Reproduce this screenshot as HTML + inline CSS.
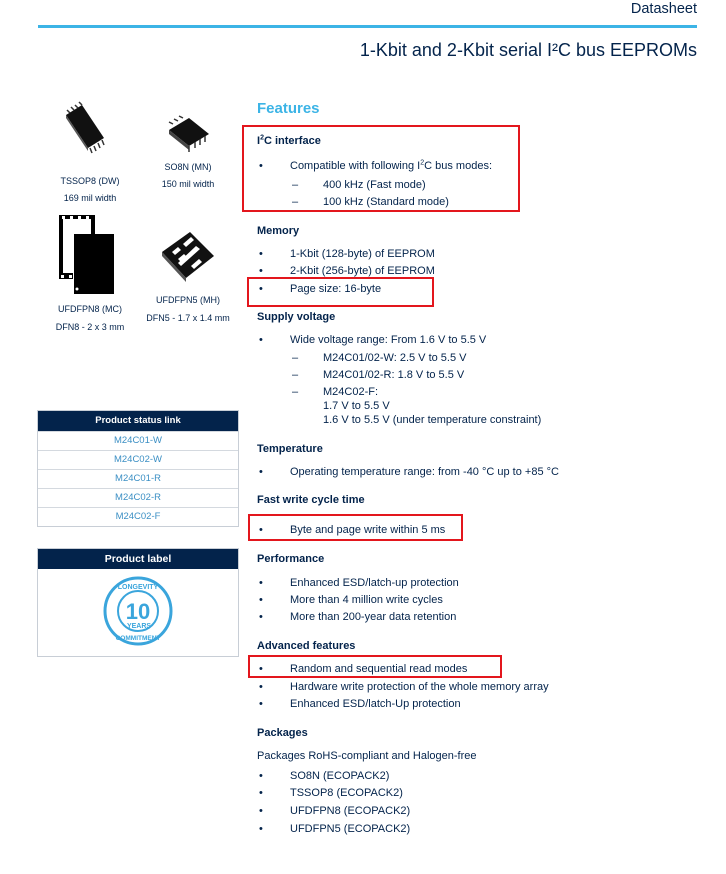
<!DOCTYPE html>
<html><head><meta charset="utf-8"><style>
body{margin:0;width:726px;height:874px;position:relative;background:#fff;font-family:"Liberation Sans",sans-serif;color:#03234b;overflow:hidden}
.t{position:absolute;font-size:11px;line-height:14px;white-space:nowrap;transform:translateY(2px)}
.h{font-weight:bold}
.red{position:absolute;border:2px solid #e3161d;box-sizing:border-box}
.c{position:absolute;font-size:9px;line-height:12px;text-align:center;white-space:nowrap}
.tb{position:absolute;left:37px;width:202px;border:1px solid #c8ced6;box-sizing:border-box}
.hd{background:#03234b;color:#fff;font-weight:bold;text-align:center}
.row{height:18px;border-top:1px solid #d4d9df;font-size:9.5px;line-height:18px;text-align:center;color:#3b8fc4}
sup{font-size:7px;line-height:0}
</style></head><body>
<div class="t" style="right:29px;top:-1px;font-size:14.5px;line-height:17px">Datasheet</div>
<div style="position:absolute;left:38px;top:25px;width:659px;height:3px;background:#3cb4e6"></div>
<div class="t" style="right:29px;top:36px;font-size:18px;line-height:24px">1-Kbit and 2-Kbit serial I²C bus EEPROMs</div>
<div class="t" style="left:257px;top:98px;font-size:15px;line-height:18px;font-weight:bold;color:#3cb4e6">Features</div>

<div class="red" style="left:242px;top:125px;width:278px;height:87px"></div>
<div class="red" style="left:247px;top:277px;width:187px;height:30px"></div>
<div class="red" style="left:248px;top:514px;width:215px;height:27px"></div>
<div class="red" style="left:248px;top:655px;width:254px;height:23px"></div>

<div class="t h" style="left:257px;top:132px">I<sup>2</sup>C interface</div>
<div class="t" style="left:259px;top:157px">•</div><div class="t" style="left:290px;top:157px">Compatible with following I<sup>2</sup>C bus modes:</div>
<div class="t" style="left:292px;top:176px">–</div><div class="t" style="left:323px;top:176px">400 kHz (Fast mode)</div>
<div class="t" style="left:292px;top:193px">–</div><div class="t" style="left:323px;top:193px">100 kHz (Standard mode)</div>

<div class="t h" style="left:257px;top:222px">Memory</div>
<div class="t" style="left:259px;top:245px">•</div><div class="t" style="left:290px;top:245px">1-Kbit (128-byte) of EEPROM</div>
<div class="t" style="left:259px;top:262px">•</div><div class="t" style="left:290px;top:262px">2-Kbit (256-byte) of EEPROM</div>
<div class="t" style="left:259px;top:280px">•</div><div class="t" style="left:290px;top:280px">Page size: 16-byte</div>

<div class="t h" style="left:257px;top:308px">Supply voltage</div>
<div class="t" style="left:259px;top:331px">•</div><div class="t" style="left:290px;top:331px">Wide voltage range: From 1.6 V to 5.5 V</div>
<div class="t" style="left:292px;top:349px">–</div><div class="t" style="left:323px;top:349px">M24C01/02-W: 2.5 V to 5.5 V</div>
<div class="t" style="left:292px;top:366px">–</div><div class="t" style="left:323px;top:366px">M24C01/02-R: 1.8 V to 5.5 V</div>
<div class="t" style="left:292px;top:383px">–</div><div class="t" style="left:323px;top:383px">M24C02-F:</div>
<div class="t" style="left:323px;top:397px">1.7 V to 5.5 V</div>
<div class="t" style="left:323px;top:411px">1.6 V to 5.5 V (under temperature constraint)</div>

<div class="t h" style="left:257px;top:440px">Temperature</div>
<div class="t" style="left:259px;top:463px">•</div><div class="t" style="left:290px;top:463px">Operating temperature range: from -40 °C up to +85 °C</div>

<div class="t h" style="left:257px;top:491px">Fast write cycle time</div>
<div class="t" style="left:259px;top:521px">•</div><div class="t" style="left:290px;top:521px">Byte and page write within 5 ms</div>

<div class="t h" style="left:257px;top:550px">Performance</div>
<div class="t" style="left:259px;top:574px">•</div><div class="t" style="left:290px;top:574px">Enhanced ESD/latch-up protection</div>
<div class="t" style="left:259px;top:591px">•</div><div class="t" style="left:290px;top:591px">More than 4 million write cycles</div>
<div class="t" style="left:259px;top:608px">•</div><div class="t" style="left:290px;top:608px">More than 200-year data retention</div>

<div class="t h" style="left:257px;top:637px">Advanced features</div>
<div class="t" style="left:259px;top:660px">•</div><div class="t" style="left:290px;top:660px">Random and sequential read modes</div>
<div class="t" style="left:259px;top:678px">•</div><div class="t" style="left:290px;top:678px">Hardware write protection of the whole memory array</div>
<div class="t" style="left:259px;top:695px">•</div><div class="t" style="left:290px;top:695px">Enhanced ESD/latch-Up protection</div>

<div class="t h" style="left:257px;top:724px">Packages</div>
<div class="t" style="left:257px;top:747px">Packages RoHS-compliant and Halogen-free</div>
<div class="t" style="left:259px;top:767px">•</div><div class="t" style="left:290px;top:767px">SO8N (ECOPACK2)</div>
<div class="t" style="left:259px;top:784px">•</div><div class="t" style="left:290px;top:784px">TSSOP8 (ECOPACK2)</div>
<div class="t" style="left:259px;top:802px">•</div><div class="t" style="left:290px;top:802px">UFDFPN8 (ECOPACK2)</div>
<div class="t" style="left:259px;top:820px">•</div><div class="t" style="left:290px;top:820px">UFDFPN5 (ECOPACK2)</div>

<!-- chips -->
<svg style="position:absolute;left:60px;top:100px" width="60" height="60" viewBox="0 0 60 60">
<polygon points="6,15 22,5 44,38 28,48" fill="#111"/>
<polygon points="6,15 28,48 28,51 6,18" fill="#555"/>
<g stroke="#333" stroke-width="1.5" fill="none"><path d="M10 13l-3-3M14 10l-3-3M18 8l-3-3M22 5l-3-3M30 48l2 5M34 46l2 5M38 43l2 5M42 40l2 5"/></g>
</svg>
<div class="c" style="left:50px;top:175px;width:80px">TSSOP8 (DW)</div>
<div class="c" style="left:50px;top:192px;width:80px">169 mil width</div>

<svg style="position:absolute;left:165px;top:112px" width="50" height="45" viewBox="0 0 50 45">
<polygon points="4,18 24,6 44,22 24,34" fill="#111"/>
<polygon points="4,18 24,34 24,38 4,22" fill="#444"/>
<g stroke="#333" stroke-width="1.5" fill="none"><path d="M8 12l-4-2M13 9l-4-2M18 6l-4-2M24 34l0 6M30 30l0 6M35 27l0 6M40 24l0 6"/></g>
</svg>
<div class="c" style="left:150px;top:161px;width:76px">SO8N (MN)</div>
<div class="c" style="left:150px;top:178px;width:76px">150 mil width</div>

<svg style="position:absolute;left:57px;top:213px" width="60" height="82" viewBox="0 0 60 82">
<path d="M2 2h36v32h-4v-28h-28v54h10v6h-14z" fill="#000"/>
<g fill="#fff"><rect x="5" y="3" width="3" height="3"/><rect x="13" y="3" width="3" height="3"/><rect x="21" y="3" width="3" height="3"/><rect x="29" y="3" width="3" height="3"/><rect x="4" y="62" width="3" height="3"/><rect x="12" y="62" width="3" height="3"/></g>
<rect x="17" y="21" width="40" height="60" fill="#000"/>
<circle cx="20" cy="76" r="1.5" fill="#fff"/>
</svg>
<div class="c" style="left:45px;top:303px;width:90px">UFDFPN8 (MC)</div>
<div class="c" style="left:45px;top:321px;width:90px">DFN8 - 2 x 3 mm</div>

<svg style="position:absolute;left:158px;top:228px" width="60" height="55" viewBox="0 0 60 55">
<polygon points="4,24 32,4 56,28 28,50" fill="#111"/>
<polygon points="4,24 28,50 28,54 4,28" fill="#555"/>
<g fill="#fff"><polygon points="14,24 20,19 23,22 17,27"/><polygon points="20,31 26,26 29,29 23,34"/><polygon points="25,16 33,9 36,12 28,19"/><polygon points="20,35 38,18 42,21 23,38"/><polygon points="33,38 41,31 44,34 36,41"/></g>
</svg>
<div class="c" style="left:148px;top:294px;width:80px">UFDFPN5 (MH)</div>
<div class="c" style="left:140px;top:312px;width:96px">DFN5 - 1.7 x 1.4 mm</div>

<div class="tb" style="top:410px">
<div class="hd" style="height:20px;font-size:9.5px;line-height:20px">Product status link</div>
<div class="row">M24C01-W</div><div class="row">M24C02-W</div><div class="row">M24C01-R</div><div class="row">M24C02-R</div><div class="row">M24C02-F</div>
</div>
<div class="tb" style="top:548px;height:109px">
<div class="hd" style="height:20px;font-size:10.5px;line-height:20px">Product label</div>
</div>
<svg style="position:absolute;left:103px;top:576px" width="70" height="70" viewBox="0 0 70 70">
<circle cx="35" cy="35" r="33" fill="none" stroke="#3aa5dc" stroke-width="3"/>
<circle cx="35" cy="35" r="20" fill="none" stroke="#3aa5dc" stroke-width="2"/>
<text x="35" y="43" text-anchor="middle" font-family="Liberation Sans" font-weight="bold" font-size="22" fill="#3aa5dc">10</text>
<text x="36" y="52" text-anchor="middle" font-family="Liberation Sans" font-weight="bold" font-size="7" fill="#3aa5dc">YEARS</text>
<text x="35" y="13" text-anchor="middle" font-family="Liberation Sans" font-weight="bold" font-size="7" fill="#3aa5dc">LONGEVITY</text>
<text x="35" y="64" text-anchor="middle" font-family="Liberation Sans" font-weight="bold" font-size="6.5" fill="#3aa5dc">COMMITMENT</text>
</svg>
</body></html>
